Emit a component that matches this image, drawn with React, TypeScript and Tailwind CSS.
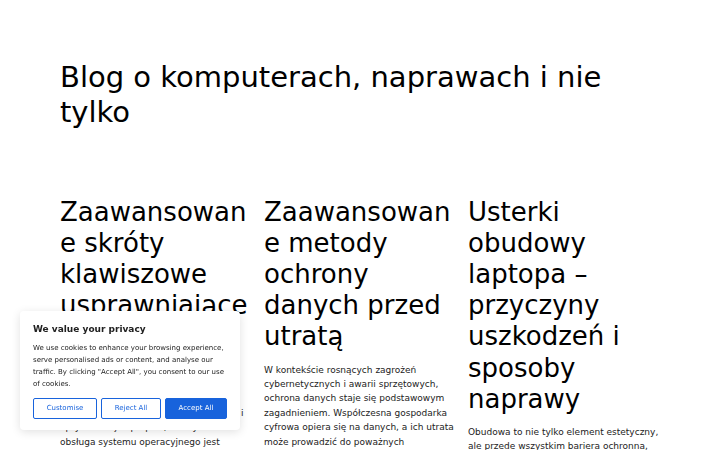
const posts = [
  {
    title: 'Zaawansowane skróty klawiszowe usprawniające pracę',
    lines: [
      'Znajomość skrótów klawiszowych to',
      'jeden z najprostszych sposobów na',
      'przyspieszenie pracy z systemem i',
      'klawiatury. W kontekście szybkiej pracy i',
      'optymalizacji laptopów, efektywna',
      'obsługa systemu operacyjnego jest',
    ],
  },
  {
    title: 'Zaawansowane metody ochrony danych przed utratą',
    excerpt:
      'W kontekście rosnących zagrożeń cybernetycznych i awarii sprzętowych, ochrona danych staje się podstawowym zagadnieniem. Współczesna gospodarka cyfrowa opiera się na danych, a ich utrata może prowadzić do poważnych',
  },
  {
    title: 'Usterki obudowy laptopa – przyczyny uszkodzeń i sposoby naprawy',
    excerpt:
      'Obudowa to nie tylko element estetyczny, ale przede wszystkim bariera ochronna, która chroni podzespoły',
  },
];

function CookieBanner() {
  return (
    <div className="fixed left-[20px] bottom-[20px] w-[220px] bg-white rounded-[4px] px-[13px] pt-[11px] pb-[11px] shadow-[0_2px_10px_rgba(0,0,0,0.12)]">
      <p className="text-[9px] font-bold leading-[14px] text-[#212121]">We value your privacy</p>
      <p className="mt-[6px] text-[7px] leading-[12px] text-[#212121]">
        We use cookies to enhance your browsing experience, serve personalised ads or content, and analyse our
        traffic. By clicking "Accept All", you consent to our use of cookies.
      </p>
      <div className="mt-[8px] flex gap-[4px]">
        <button className="h-[21px] w-[64px] border-[1.5px] border-[#1863dc] rounded-[2px] text-[7px] text-[#1863dc] bg-white">
          Customise
        </button>
        <button className="h-[21px] w-[60px] border-[1.5px] border-[#1863dc] rounded-[2px] text-[7px] text-[#1863dc] bg-white">
          Reject All
        </button>
        <button className="h-[21px] w-[62px] border-[1.5px] border-[#1863dc] rounded-[2px] text-[7px] text-white bg-[#1863dc]">
          Accept All
        </button>
      </div>
    </div>
  );
}

export default function App() {
  return (
    <div className="min-h-screen bg-white font-['DejaVu_Sans',sans-serif] text-black">
      <main className="mx-auto w-[600px] pt-[60px]">
        <h1 className="text-[29px] leading-[1.2] font-normal">Blog o komputerach, naprawach i nie tylko</h1>

        <div className="mt-[67px] grid grid-cols-3 gap-x-[12px]">
          {posts.map((post) => (
            <article key={post.title} className="min-w-0">
              <h2 className="text-[26px] leading-[1.2] font-normal break-words">{post.title}</h2>
              <p className="mt-[10px] text-[9px] leading-[14.4px] text-[#222]">
                {post.lines
                  ? post.lines.map((line, i) => (
                      <span key={i}>
                        {line}
                        {i < post.lines.length - 1 && <br />}
                      </span>
                    ))
                  : post.excerpt}
              </p>
            </article>
          ))}
        </div>
      </main>

      <CookieBanner />
    </div>
  );
}
